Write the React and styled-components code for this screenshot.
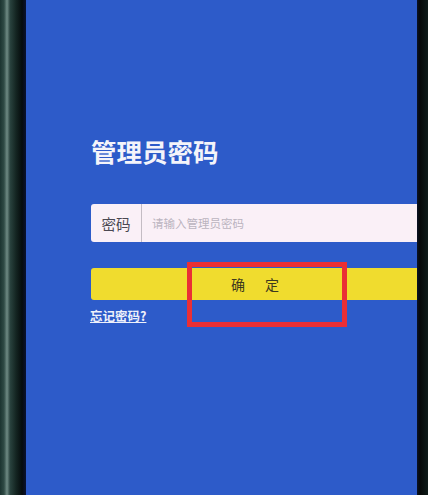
import styled, { createGlobalStyle } from "styled-components";

const GlobalStyle = createGlobalStyle`
  html, body {
    margin: 0;
    padding: 0;
    background: #0b1614;
  }
  body {
    font-family: "Noto Sans CJK SC", "Noto Sans", sans-serif;
  }
`;

const Phone = styled.div`
  display: flex;
  width: 428px;
  height: 495px;
  overflow: hidden;
`;

const LeftBezel = styled.div`
  width: 26px;
  flex-shrink: 0;
  background: linear-gradient(
    to right,
    #1b3330 0px,
    #2f4a45 4px,
    #6f8a84 7px,
    #2a433f 10px,
    #142522 16px,
    #050b0c 22px,
    #0a1230 26px
  );
`;

const RightBezel = styled.div`
  width: 11px;
  flex-shrink: 0;
  background: linear-gradient(to right, #0a1226 0px, #050808 3px, #0d1a18 11px);
`;

const Screen = styled.div`
  flex: 1;
  background: #2d5bc9;
  padding: 135px 0 0 65px;
  display: flex;
  flex-direction: column;
`;

const Title = styled.h1`
  margin: 0;
  color: #f4f4fa;
  font-size: 25.5px;
  font-weight: 700;
  line-height: 32px;
`;

const InputRow = styled.div`
  margin-top: 37px;
  display: flex;
  align-items: center;
  height: 38px;
  background: #faf0f7;
  border-radius: 3px 0 0 3px;
`;

const Label = styled.span`
  width: 51px;
  height: 100%;
  display: flex;
  align-items: center;
  justify-content: center;
  font-size: 14.5px;
  color: #4a4852;
  border-right: 1px solid #c4bcc4;
  box-sizing: border-box;
`;

const Placeholder = styled.span`
  padding-left: 10px;
  font-size: 11.5px;
  color: #bbb4bf;
`;

const ButtonWrap = styled.div`
  position: relative;
  margin-top: 26px;
`;

const Confirm = styled.div`
  height: 32px;
  background: #f0dc2e;
  border-radius: 3px 0 0 3px;
  display: flex;
  align-items: center;
  justify-content: center;
  font-size: 14px;
  color: #3e3a1e;
  letter-spacing: 20px;
  padding-left: 22px;
`;

const Highlight = styled.div`
  position: absolute;
  left: 96px;
  top: -6px;
  width: 160px;
  height: 65px;
  border: 5px solid #ea2f35;
  box-sizing: border-box;
`;

const Forgot = styled.a`
  margin-top: 8px;
  align-self: flex-start;
  margin-left: -1px;
  color: #eef0fa;
  font-size: 12.5px;
  font-weight: 700;
  text-decoration: underline;
  line-height: 16px;
`;

export default function App() {
  return (
    <>
      <GlobalStyle />
      <Phone>
        <LeftBezel />
        <Screen>
          <Title>管理员密码</Title>
          <InputRow>
            <Label>密码</Label>
            <Placeholder>请输入管理员密码</Placeholder>
          </InputRow>
          <ButtonWrap>
            <Confirm>确定</Confirm>
            <Highlight />
          </ButtonWrap>
          <Forgot>忘记密码?</Forgot>
        </Screen>
        <RightBezel />
      </Phone>
    </>
  );
}
